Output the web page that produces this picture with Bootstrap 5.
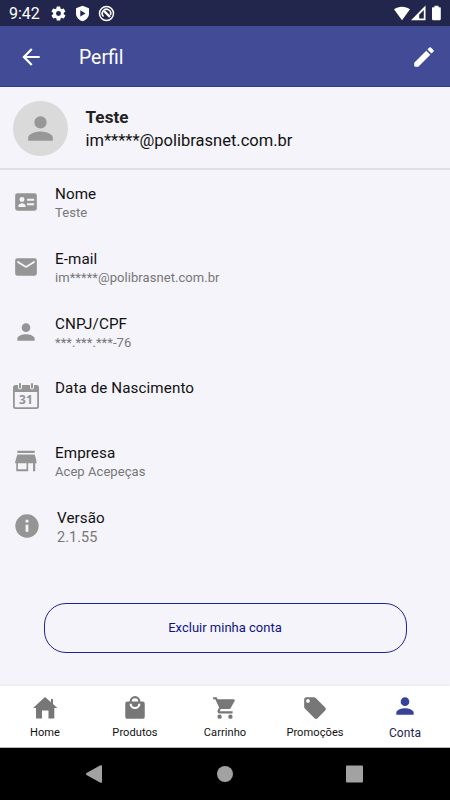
<!DOCTYPE html>
<html lang="pt-BR">
<head>
<meta charset="utf-8">
<meta name="viewport" content="width=device-width, initial-scale=1">
<title>Perfil</title>
<link href="https://cdn.jsdelivr.net/npm/bootstrap@5.3.0/dist/css/bootstrap.min.css" rel="stylesheet">
<style>
body{font-family:Roboto,"Liberation Sans",sans-serif;background:#f4f4fa;height:800px;overflow:hidden;color:#111;white-space:nowrap}
svg{display:block;flex:none;fill:currentColor}
.statusbar{height:26px;background:#22264d;font-size:16px;line-height:24px;padding:0 7px 0 9px}
.statusbar .clock{width:41px;padding-top:2px}
.appbar{height:61px;background:#424c96;border-bottom:1px solid #2c3a93;padding:1px 13px 0 18px}
.appbar h1{font-size:19.4px;font-weight:400;margin:0 auto 0 35px;padding-top:2px}
.person{height:83px;border-bottom:2px solid #e0e0e3;padding:0 13px}
.avatar{width:55px;height:55px;background:#dadada;color:#979797;margin:1px 17.5px 0 0}
.person .who{font-size:16.5px;line-height:23px;padding-top:3px}
.person strong{font-weight:700;font-size:17px;letter-spacing:.1px;color:#222}
.field{height:64.75px;padding:14px 0 0 13px}
.field .glyph{width:26px;height:26px;margin:5px 16px 0 0;color:#959595}
.field .glyph text{font:700 12px "Open Sans",Roboto,sans-serif;letter-spacing:.3px}
.field dt{font-size:15.2px;font-weight:400;line-height:20px;letter-spacing:.09px}
.field dd{font-size:13px;line-height:18px;color:#777;margin:0;letter-spacing:.06px}
.field.version .glyph{width:28px;height:28px;margin:4px 16px 0 0}
.field.version dd{font-size:14.4px;line-height:20px}
.btn-outline{--bs-btn-color:#101585;--bs-btn-border-color:#1d2590;--bs-btn-border-radius:22px;--bs-btn-font-size:13px;--bs-btn-font-weight:400;width:363px;height:50px;margin:44.5px auto 0 43.5px;letter-spacing:0}
.tabs{height:62px;background:#fff;border-bottom:1px solid #bbb;box-shadow:0 -1px 2px #e7e7ee;font-size:11.1px;letter-spacing:.05px}
.tabs svg{color:#777;width:26px;height:26px;margin:9px auto 4px}
.tabs span{line-height:16px}
.tabs .active{color:#1d2050;font-size:12px}
.tabs .active svg{color:#36439a;margin:7px auto 5px}
.sysbar{height:52px;background:#000;color:#a2a2a2}
</style>
<script src="https://cdn.jsdelivr.net/npm/bootstrap@5.3.0/dist/js/bootstrap.bundle.min.js"></script>
</head>
<body class="d-flex flex-column">
<div class="statusbar d-flex align-items-center text-white">
  <span class="clock">9:42</span>
  <svg width="17" height="17" viewBox="0 0 24 24"><path d="M19.4 13a7.500 7.500 0 0 0 0-2l2.100-1.600a.5.5 0 0 0 .1-.6l-2-3.500a.5.5 0 0 0-.6-.2l-2.500 1a7 7 0 0 0-1.700-1l-.4-2.600a.5.5 0 0 0-.5-.5h-4a.5.5 0 0 0-.5.5L9 5.100a7 7 0 0 0-1.700 1l-2.500-1a.5.5 0 0 0-.6.2l-2 3.500a.5.5 0 0 0 .1.6L4.500 11a7.500 7.500 0 0 0 0 2l-2.100 1.600a.5.5 0 0 0-.1.6l2 3.500c.1.200.4.300.6.200l2.500-1a7 7 0 0 0 1.700 1l.4 2.600c0 .2.200.5.500.5h4c.3 0 .5-.2.500-.5l.4-2.600a7 7 0 0 0 1.700-1l2.500 1c.2.100.5 0 .6-.2l2-3.500a.5.5 0 0 0-.1-.6zM12 15.500a3.500 3.500 0 1 1 0-7 3.500 3.500 0 0 1 0 7z"/></svg>
  <svg class="ms-2" width="15" height="17" viewBox="0 0 15 17"><path d="M7.500.8 14 3.200v5C14 12.500 11 15 7.500 16.300 4 15 1 12.500 1 8.200v-5z"/><path fill="#22264d" d="M5.300 5.200v6.400l5.200-3.200z"/></svg>
  <svg class="ms-2" width="17" height="17" viewBox="0 0 17 17" stroke="#fff"><circle cx="8.500" cy="8.500" r="7" stroke-width="1.500" fill="none"/><path d="M5.600 11.500a4.200 4.200 0 1 1 6.700-1.300" stroke-width="1.600" fill="none"/><path d="m6.200 6.200 5.800 5.800" stroke-width="2.400"/></svg>
  <svg class="ms-auto" width="18" height="15" viewBox="0 0 18 15"><path d="M1 3.200C5.500-.2 12.500-.2 17 3.200L9 14.300z"/></svg>
  <svg width="15" height="16" viewBox="0 0 15 16"><path fill-rule="evenodd" d="M0 15.200 14.500.5v14.700zM8.200 13.600h4.600V5l-4.600 4.700z"/></svg>
  <svg class="ms-1" width="13" height="16" viewBox="0 0 13 16"><path d="M4.500.8h4v1.400h1.300c.6 0 1 .4 1 1V14c0 .7-.4 1.200-1 1.200H3c-.6 0-1-.5-1-1.200V3.200c0-.6.400-1 1-1h1.500z"/></svg>
</div>
<header class="appbar d-flex align-items-center text-white">
  <svg width="26" height="26" viewBox="0 0 24 24"><path d="M20 11H7.830l5.590-5.590L12 4l-8 8 8 8 1.410-1.410L7.830 13H20v-2z"/></svg>
  <h1>Perfil</h1>
  <svg width="26" height="26" viewBox="0 0 24 24"><path d="M3 17.250V20q0 1 1 1h2.750L17.810 9.940l-3.750-3.750L3 17.250zM20.710 7.040a1 1 0 0 0 0-1.410l-2.340-2.340a1 1 0 0 0-1.410 0l-1.830 1.830 3.750 3.750 1.830-1.830z"/></svg>
</header>
<main class="flex-grow-1">
  <section class="person d-flex align-items-center">
    <div class="avatar rounded-circle d-flex align-items-center justify-content-center"><svg width="37" height="37" viewBox="0 0 24 24"><path d="M12 12a4 4 0 1 0 0-8 4 4 0 0 0 0 8zm0 2c-2.670 0-8 1.340-8 4v2h16v-2c0-2.660-5.330-4-8-4z"/></svg></div>
    <div class="who"><strong class="d-block">Teste</strong>im*****@polibrasnet.com.br</div>
  </section>
  <dl class="m-0">
    <div class="field d-flex"><svg class="glyph" viewBox="0 0 24 24"><path fill-rule="evenodd" d="M4 4h16a2 2 0 0 1 2 2v12a2 2 0 0 1-2 2H4a2 2 0 0 1-2-2V6a2 2 0 0 1 2-2zM8.300 12a2.300 2.300 0 1 0 0-4.600 2.300 2.300 0 0 0 0 4.600zM5 16.500h6.600v-1c0-1.500-2-2.300-3.300-2.300S5 14 5 15.500zM13 9v1.800h6.500V9zm0 4.200V15h6.500v-1.800z"/></svg><div><dt>Nome</dt><dd>Teste</dd></div></div>
    <div class="field d-flex"><svg class="glyph" viewBox="0 0 24 24"><path d="M20 4H4a2 2 0 0 0-2 2v12c0 1.100.9 2 2 2h16a2 2 0 0 0 2-2V6a2 2 0 0 0-2-2zm0 4-8 5-8-5V6l8 5 8-5v2z"/></svg><div><dt>E-mail</dt><dd>im*****@polibrasnet.com.br</dd></div></div>
    <div class="field d-flex"><svg class="glyph" viewBox="0 0 24 24"><path d="M12 12a4 4 0 1 0 0-8 4 4 0 0 0 0 8zm0 2c-2.670 0-8 1.340-8 4v2h16v-2c0-2.660-5.330-4-8-4z"/></svg><div><dt>CNPJ/CPF</dt><dd>***.***.***-76</dd></div></div>
    <div class="field d-flex"><svg class="glyph" viewBox="0 0 26 26"><path fill-rule="evenodd" d="M2.500 2H5v2.500a2 2 0 0 0 4 0V2h8v2.500a2 2 0 0 0 4 0V2h2.500A2.500 2.500 0 0 1 26 4.500v19a2.500 2.500 0 0 1-2.500 2.500h-21A2.500 2.500 0 0 1 0 23.500v-19A2.500 2.500 0 0 1 2.500 2zM1.800 9v14.200c0 .6.400 1 1 1h20.400c.6 0 1-.4 1-1V9z"/><rect x="6" y="0" width="2" height="5.500" rx="1"/><rect x="18" y="0" width="2" height="5.500" rx="1"/><text x="13.100" y="21" text-anchor="middle">31</text></svg><div><dt>Data de Nascimento</dt></div></div>
    <div class="field d-flex"><svg class="glyph" viewBox="0 0 24 24"><path d="M20 2.500H4v2h16zM21.500 13v-2L20 6H4l-1.500 5-.5 2v1h1v7.500h11V14h4.500v7.500h2V14H22zM12.500 19.500h-8V14h8z"/></svg><div><dt>Empresa</dt><dd>Acep Acepeças</dd></div></div>
    <div class="field version d-flex"><svg class="glyph" viewBox="0 0 24 24"><path d="M12 2a10 10 0 1 0 0 20 10 10 0 0 0 0-20zm1.200 15h-2.400v-6h2.400zm0-8h-2.400V6.700h2.400z"/></svg><div><dt>Versão</dt><dd>2.1.55</dd></div></div>
  </dl>
  <button class="btn btn-outline d-block">Excluir minha conta</button>
</main>
<nav class="tabs row g-0 text-center">
  <div class="col"><svg viewBox="0 0 26 26"><path d="M13 2 1 13h3v10.500h6V15.500h6.500v8h5.800V13h3l-4.300-4V4h-2v3.200z"/></svg><span>Home</span></div>
  <div class="col"><svg viewBox="0 0 24 24"><path d="M19 6h-2A5 5 0 0 0 7 6H5a2 2 0 0 0-2 2v12c0 1.100.9 2 2 2h14a2 2 0 0 0 2-2V8a2 2 0 0 0-2-2zm-7-3a3 3 0 0 1 3 3H9a3 3 0 0 1 3-3zm0 10a5 5 0 0 1-5-5h2a3 3 0 0 0 6 0h2a5 5 0 0 1-5 5z"/></svg><span>Produtos</span></div>
  <div class="col"><svg viewBox="0 0 24 24"><path d="M7 18a2 2 0 1 0 0 4 2 2 0 0 0 0-4zM1 2v2h2l3.600 7.590-1.350 2.450C4.520 15.370 5.480 17 7 17h12v-2H7.420a.25.25 0 0 1-.25-.25l.03-.12.900-1.630h7.450c.75 0 1.410-.41 1.750-1.030l3.580-6.490A1 1 0 0 0 20 4H5.210l-.94-2H1zm16 16a2 2 0 1 0 0 4 2 2 0 0 0 0-4z"/></svg><span>Carrinho</span></div>
  <div class="col"><svg viewBox="0 0 24 24"><path d="m21.410 11.580-9-9A2 2 0 0 0 11 2H4a2 2 0 0 0-2 2v7c0 .55.22 1.050.59 1.420l9 9a2 2 0 0 0 2.820 0l7-7a2 2 0 0 0 0-2.840zM5.500 7.200a1.700 1.700 0 1 1 0-3.400 1.700 1.700 0 0 1 0 3.400z"/></svg><span>Promoções</span></div>
  <div class="col active"><svg viewBox="0 0 24 24"><path d="M12 12a4 4 0 1 0 0-8 4 4 0 0 0 0 8zm0 2c-2.670 0-8 1.340-8 4v2h16v-2c0-2.660-5.330-4-8-4z"/></svg><span>Conta</span></div>
</nav>
<div class="sysbar d-flex align-items-center justify-content-center">
  <svg width="130" height="18" viewBox="0 0 130 18"><path d="M16 .5v17q-1 .5-2 0L.5 10q-1-1 0-2L14 .5q1-.5 2 0z"/></svg>
  <svg width="18" height="18" viewBox="0 0 18 18"><circle cx="9" cy="9" r="8"/></svg>
  <svg width="130" height="18" viewBox="0 0 130 18"><rect x="112" y=".5" width="17" height="17" rx="1"/></svg>
</div>
</body>
</html>
